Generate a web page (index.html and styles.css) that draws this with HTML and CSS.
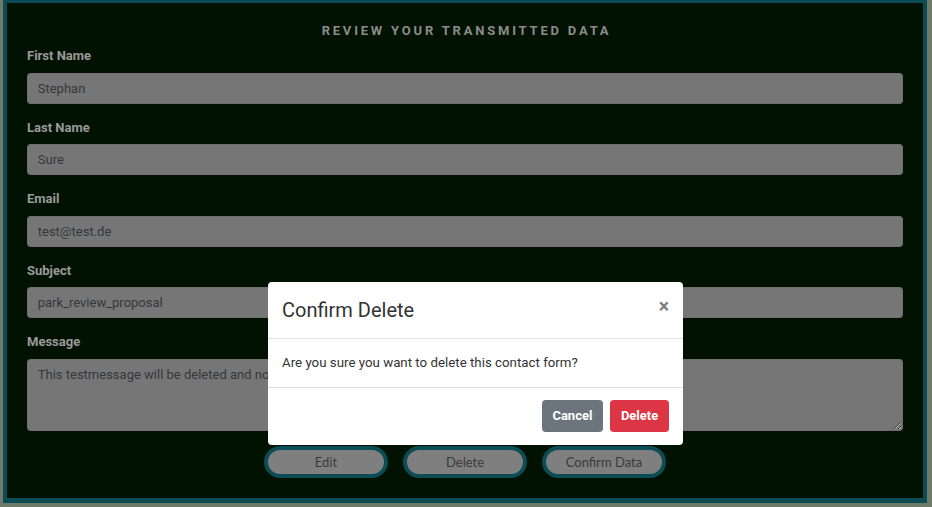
FILE: index.html
```html
<!DOCTYPE html>
<html lang="en">
<head>
<meta charset="utf-8">
<title>Review your transmitted data</title>
<link rel="stylesheet" href="styles.css">
</head>
<body>
<section class="review">
  <h2 class="title">Review your transmitted data</h2>
  <div class="group">
    <label class="label">First Name</label>
    <input class="field" type="text" value="Stephan" readonly>
  </div>
  <div class="group">
    <label class="label">Last Name</label>
    <input class="field" type="text" value="Sure" readonly>
  </div>
  <div class="group">
    <label class="label">Email</label>
    <input class="field" type="text" value="test@test.de" readonly>
  </div>
  <div class="group">
    <label class="label">Subject</label>
    <input class="field" type="text" value="park_review_proposal" readonly>
  </div>
  <div class="group group-last">
    <label class="label">Message</label>
    <textarea class="field area" readonly>This testmessage will be deleted and not be sent.</textarea>
  </div>
  <div class="actions">
    <button class="pill" type="button">Edit</button>
    <button class="pill" type="button">Delete</button>
    <button class="pill" type="button">Confirm Data</button>
  </div>
</section>

<div class="modal" role="dialog">
  <div class="modal-header">
    <h5 class="modal-title">Confirm Delete</h5>
    <button class="close" type="button" aria-label="Close">&times;</button>
  </div>
  <div class="modal-body">Are you sure you want to delete this contact form?</div>
  <div class="modal-footer">
    <button class="btn btn-cancel" type="button">Cancel</button>
    <button class="btn btn-delete" type="button">Delete</button>
  </div>
</div>
</body>
</html>
```

FILE: styles.css
```css
html, body {
  margin: 0;
  height: 100%;
}

body {
  background: #6e7b68;
  padding: 0 5px 4px 3px;
  box-sizing: border-box;
  overflow: hidden;
  font-family: Roboto, "Liberation Sans", sans-serif;
}

.review {
  background: #011201;
  border: 4px solid #0b4c55;
  border-top-width: 3px;
  border-bottom-width: 5px;
  padding: 18px 20px 20px;
}

.title {
  margin: 0 0 5.75px;
  text-align: center;
  font-size: 13px;
  line-height: 19.5px;
  font-weight: 700;
  letter-spacing: 2.8px;
  text-transform: uppercase;
  color: #8b8b8b;
  padding-left: 3px;
}

.group {
  display: flex;
  flex-direction: column;
  margin-bottom: 14px;
}

.group-last {
  margin-bottom: 0;
}

.label {
  font-size: 13px;
  line-height: 19.5px;
  font-weight: 700;
  color: #9a9a9a;
  margin-bottom: 7px;
}

.field {
  box-sizing: border-box;
  width: 100%;
  height: 31px;
  padding: 0 9.75px;
  background: #767676;
  border: 1px solid #6f6f6f;
  border-radius: 3.25px;
  color: #35383b;
  font-family: Roboto, "Liberation Sans", sans-serif;
  font-size: 13px;
  line-height: 19.5px;
  margin: 0;
  outline: none;
}

.area {
  height: 72px;
  padding: 4.875px 9.75px;
  resize: vertical;
  display: block;
}

.actions {
  display: flex;
  justify-content: center;
  gap: 15px;
  margin-top: 15px;
}

.pill {
  box-sizing: border-box;
  width: 124px;
  height: 32px;
  border: 4px solid #0b4c55;
  border-radius: 16px;
  background: #7f7f7f;
  color: #3a3a3a;
  font-family: Lato, "Open Sans", sans-serif;
  font-size: 13px;
  padding: 0;
  margin: 0;
}

.modal {
  position: absolute;
  left: 268px;
  top: 282px;
  width: 415px;
  box-sizing: border-box;
  background: #fff;
  border-radius: 4px;
  color: #333;
  font-family: Roboto, "Liberation Sans", sans-serif;
}

.modal-header {
  display: flex;
  align-items: flex-start;
  justify-content: space-between;
  padding: 13px 14px;
  border-bottom: 1px solid #dee2e6;
}

.modal-title {
  margin: 0;
  font-size: 20px;
  line-height: 30px;
  font-weight: 400;
}

.close {
  background: none;
  border: 0;
  padding: 0;
  margin: 2px 0 0;
  font-family: Roboto, "Liberation Sans", sans-serif;
  font-size: 19.5px;
  font-weight: 700;
  line-height: 1;
  color: #7d7d7d;
}

.modal-body {
  padding: 14px;
  font-size: 13.3px;
  line-height: 19.5px;
}

.modal-footer {
  display: flex;
  justify-content: flex-end;
  gap: 7px;
  padding: 12px 14px 13px;
  border-top: 1px solid #dee2e6;
}

.btn {
  box-sizing: border-box;
  height: 32px;
  padding: 0 9.75px;
  border: 1px solid transparent;
  border-radius: 3.25px;
  color: #fff;
  font-family: Roboto, "Liberation Sans", sans-serif;
  font-size: 13px;
  font-weight: 700;
}

.btn-cancel {
  background: #6c757d;
  border-color: #6c757d;
}

.btn-delete {
  background: #dc3545;
  border-color: #dc3545;
}
```
